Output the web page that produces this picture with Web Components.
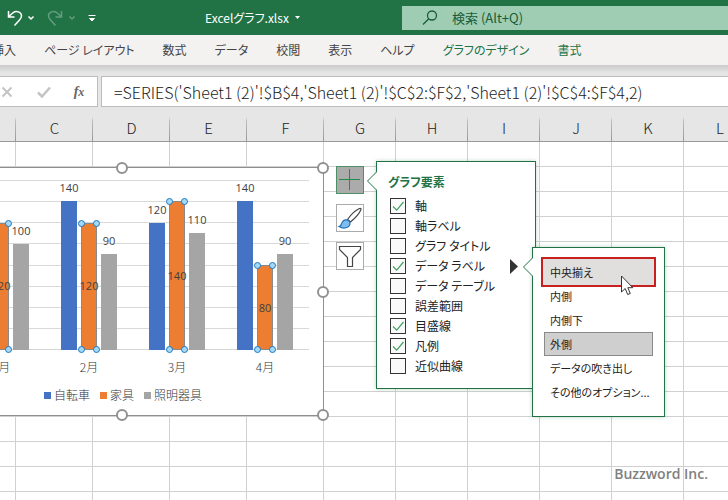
<!DOCTYPE html>
<html lang="ja">
<head>
<meta charset="utf-8">
<title>Excelグラフ.xlsx</title>
<style>
  html, body {
    height: 100%;
    margin: 0;
    overflow: hidden;
  }

  body {
    --green: #217346;
    --line: #d0d0d0;
    display: flex;
    flex-direction: column;
    background: #fff;
    color: #333;
    font-family: "Noto Sans CJK JP", "Noto Sans", sans-serif;
    font-size: 12px;
    font-feature-settings: "palt";
  }

  bar-chart, chart-tools, callout-panel, pointer-arrow, water-mark {
    position: absolute;
  }

  bar-chart { left: -81px; top: 60px; }
  chart-tools { left: 336px; top: 59px; }
  #elements { left: 376px; top: 54px; }
  #labels { left: 532px; top: 140px; }
  pointer-arrow { left: 621px; top: 168px; }
  water-mark { right: 20px; bottom: 16px; }
</style>
</head>
<body>
  <title-bar></title-bar>
  <ribbon-tabs></ribbon-tabs>
  <formula-bar></formula-bar>
  <sheet-grid>
    <bar-chart></bar-chart>
    <chart-tools></chart-tools>
    <callout-panel id="elements" heading="グラフ要素">
      <check-option checked>軸</check-option>
      <check-option>軸ラベル</check-option>
      <check-option>グラフ タイトル</check-option>
      <check-option checked more>データ ラベル</check-option>
      <check-option>データ テーブル</check-option>
      <check-option>誤差範囲</check-option>
      <check-option checked>目盛線</check-option>
      <check-option checked>凡例</check-option>
      <check-option>近似曲線</check-option>
    </callout-panel>
    <callout-panel id="labels">
      <menu-option state="marked">中央揃え</menu-option>
      <menu-option>内側</menu-option>
      <menu-option>内側下</menu-option>
      <menu-option state="selected">外側</menu-option>
      <menu-option>データの吹き出し</menu-option>
      <menu-option>その他のオプション...</menu-option>
    </callout-panel>
    <pointer-arrow></pointer-arrow>
    <water-mark>Buzzword Inc.</water-mark>
  </sheet-grid>

<script>
  class BaseElement extends HTMLElement {
    constructor() {
      super();
      this.shadowDOM = this.attachShadow({ mode: "open" });
    }

    connectedCallback() {
      this.shadowDOM.innerHTML = this.render();
    }
  }

  class TitleBar extends BaseElement {
    render() {
      return `
      <style>
      :host {
        display: grid;
        grid-template-columns: 200px 202px 1fr;
        align-items: center;
        height: 35px;
        background: var(--green);
        color: #fff;
      }
      .quick { display: flex; align-items: center; padding-left: 6px; }
      button {
        display: flex;
        padding: 0;
        border: 0;
        background: none;
        color: inherit;
        font: inherit;
        font-feature-settings: inherit;
      }
      .faded { opacity: .3; }
      .arrow { margin: 0 12px 0 4px; }
      .file { align-items: center; gap: 6px; padding-left: 5px; }
      .search {
        display: flex;
        align-items: center;
        gap: 14px;
        height: 24px;
        padding-left: 20px;
        background: #9fcdb3;
        color: #185c37;
      }
      input {
        flex: 1;
        min-width: 0;
        padding: 0;
        border: 0;
        outline: 0;
        background: none;
        font: inherit;
        font-size: 13px;
      }
      input::placeholder { color: #185c37; opacity: 1; }
      svg { display: block; fill: none; stroke: currentColor; }
      </style>
      <div class="quick">
        <button aria-label="元に戻す"><svg width="17" height="18" stroke-width="1.5"><path d="M2.5 2v6h6M2.8 7.5 7 3.8c3-2.5 8.5-1 8.5 3 0 2-1 3.2-2.2 4.5L8.5 16.5"/></svg></button>
        <button class="arrow" aria-label="元に戻す一覧"><svg width="8" height="6" stroke-width="1.5"><path d="M1.5 1.5 4 4l2.5-2.5"/></svg></button>
        <button class="faded" aria-label="やり直し"><svg width="17" height="18" stroke-width="1.5"><path d="M14.5 2v6h-6M14.2 7.5 10 3.8c-3-2.5-8.5-1-8.5 3 0 2 1 3.2 2.2 4.5l4.8 5.2"/></svg></button>
        <button class="arrow faded" aria-label="やり直し一覧"><svg width="8" height="6" stroke-width="1.5"><path d="M1.5 1.5 4 4l2.5-2.5"/></svg></button>
        <button aria-label="ツール バーのカスタマイズ"><svg width="8" height="8"><path d="M.5 1.5h7M1.5 4.5 4 7l2.5-2.5z" fill="#fff"/></svg></button>
      </div>
      <button class="file">Excelグラフ.xlsx <svg width="5" height="3"><path d="M0 0h5L2.5 3z" fill="#fff" stroke="none"/></svg></button>
      <label class="search">
        <svg width="16" height="16" stroke-width="1.3"><circle cx="10" cy="5.5" r="4.5"/><path d="M6.8 8.7 1 14.5"/></svg>
        <input type="search" aria-label="検索" placeholder="検索 (Alt+Q)">
      </label>`;
    }
  }

  class RibbonTabs extends BaseElement {
    render() {
      const tabs = ["挿入", "ページ レイアウト", "数式", "データ", "校閲", "表示", "ヘルプ"];
      const tools = ["グラフのデザイン", "書式"];
      return `
      <style>
      :host { display: block; background: #f3f2f1; overflow: hidden; }
      nav {
        display: flex;
        gap: 28px;
        margin-left: -8px;
        line-height: 30px;
      }
      a { color: #444; text-decoration: none; white-space: nowrap; }
      .tool { color: var(--green); }
      </style>
      <nav>
        ${tabs.map((t) => `<a href="#">${t}</a>`).join("")}
        ${tools.map((t) => `<a class="tool" href="#">${t}</a>`).join("")}
      </nav>`;
    }
  }

  class FormulaBar extends BaseElement {
    render() {
      return `
      <style>
      :host {
        display: flex;
        gap: 3px;
        padding-top: 11px;
        background: linear-gradient(#cccaca, #e6e6e6 8px);
      }
      .box {
        box-sizing: border-box;
        height: 31px;
        border: 1px solid #bcbcbc;
        border-left-width: 0;
        background: #fff;
      }
      .buttons {
        display: flex;
        align-items: center;
        gap: 24px;
        padding: 0 12px 0 1px;
      }
      button {
        width: 12px;
        padding: 0;
        border: 0;
        background: none;
        color: #666;
        font: italic bold 14px "Liberation Serif", serif;
      }
      svg { display: block; fill: none; stroke: #c4c4c4; stroke-width: 2; }
      small { font-size: 12px; }
      input.box {
        flex: 1;
        min-width: 0;
        padding: 0 12px;
        border-width: 1px 0 1px 1px;
        border-radius: 0;
        outline: 0;
        color: #222;
        font: inherit;
        font-size: 16px;
        font-weight: 300;
      }
      </style>
      <div class="box buttons">
        <button aria-label="キャンセル"><svg width="12" height="12"><path d="m1.5 1.5 9 9M10.5 1.5l-9 9"/></svg></button>
        <button aria-label="入力"><svg width="14" height="12"><path d="m1 6.5 4 4 8-9" stroke-width="2.5"/></svg></button>
        <button aria-label="関数の挿入">f<small>x</small></button>
      </div>
      <input class="box" aria-label="数式バー" value="=SERIES('Sheet1 (2)'!$B$4,'Sheet1 (2)'!$C$2:$F$2,'Sheet1 (2)'!$C$4:$F$4,2)">`;
    }
  }

  class SheetGrid extends BaseElement {
    render() {
      const columns = ["C", "D", "E", "F", "G", "H", "I", "J", "K", "L"];
      const cells = "<td></td>".repeat(columns.length + 1);
      return `
      <style>
      :host {
        display: block;
        position: relative;
        flex: 1;
        min-height: 0;
        overflow: hidden;
      }
      table { border-spacing: 0; }
      th, td {
        box-sizing: border-box;
        padding: 0;
        border-right: 1px solid var(--line);
        border-bottom: 1px solid var(--line);
      }
      th {
        min-width: 72px;
        height: 35px;
        padding-top: 8px;
        border-right: 0;
        border-bottom-color: #999;
        background:
          linear-gradient(transparent 10px, #bbb 14px, #999) right / 1px 100% no-repeat,
          #e6e6e6;
        color: #222;
        font-size: 15px;
        font-weight: 300;
        line-height: 20px;
      }
      th.edge { min-width: 16px; }
      th.wide { min-width: 77px; }
      td { height: 25px; }
      </style>
      <table>
        <tr><th class="edge"></th>${columns.map((c) => `<th class="${c < "G" ? "wide" : ""}">${c}</th>`).join("")}</tr>
        ${`<tr>${cells}</tr>`.repeat(15)}
      </table>
      <slot></slot>`;
    }
  }

  // one column of the chart; value is measured against an axis of 0 to 160
  class DataBar extends BaseElement {
    render() {
      const value = this.getAttribute("value");
      const picked = this.hasAttribute("picked");
      return `
      <style>
      :host {
        display: flex;
        box-sizing: border-box;
        position: relative;
        justify-content: center;
        width: 16px;
        height: ${value / 160 * 100}%;
        background: var(--fill);
        color: #404040;
        font-family: "Open Sans", sans-serif;
        font-size: 11px;
        font-weight: 400;
        line-height: 16px;
      }
      :host([picked]) { align-items: center; border: 1px solid #8a8a8a; }
      :host(:not([picked])) span { margin-top: -21px; }
      i {
        position: absolute;
        box-sizing: border-box;
        width: 7px;
        height: 7px;
        border: 1px solid #1f78bd;
        border-radius: 50%;
        background: #a4daf8;
      }
      .t { top: -4px; }
      .b { bottom: -4px; }
      .l { left: -4px; }
      .r { right: -4px; }
      </style>
      <span>${value}</span>
      ${picked ? '<i class="t l"></i><i class="t r"></i><i class="b l"></i><i class="b r"></i>' : ""}`;
    }
  }

  class BarChart extends BaseElement {
    render() {
      const months = [
        ["1月", 80, 120, 100],
        ["2月", 140, 120, 90],
        ["3月", 120, 140, 110],
        ["4月", 140, 80, 90],
      ];
      const group = ([, a, b, c]) => `
        <div class="group">
          <data-bar class="a" value="${a}"></data-bar>
          <data-bar class="b" value="${b}" picked></data-bar>
          <data-bar class="c" value="${c}"></data-bar>
        </div>`;
      return `
      <style>
      :host {
        display: block;
        box-sizing: border-box;
        width: 405px;
        padding: 12px 14px 11px 37px;
        border: 1px solid #8f8f8f;
        background: #fff;
        color: #333;
        font-weight: 300;
        line-height: 18px;
      }
      .plot { display: grid; height: 170px; }
      .lines, .groups { grid-area: 1 / 1; }
      .lines { display: flex; flex-direction: column; border-bottom: 1px solid #d4d4d4; }
      .lines div { flex: 1; border-top: 1px solid #d9d9d9; }
      .groups, .months { display: grid; grid-template-columns: repeat(4, 1fr); }
      .group { display: flex; align-items: flex-end; justify-content: center; gap: 4px; }
      .months { padding: 8px 0 10px; text-align: center; }
      .a { --fill: #4472c4; }
      .b { --fill: #ed7d31; }
      .c { --fill: #a5a5a5; }
      .legend { display: flex; justify-content: center; gap: 10px; margin: 0 14px 0 -6px; }
      .legend span { display: flex; align-items: center; gap: 3px; }
      .legend span::before { content: ""; width: 7px; height: 7px; background: var(--fill); }
      .handle {
        position: absolute;
        box-sizing: border-box;
        width: 12px;
        height: 12px;
        border: 2px solid #919191;
        border-radius: 50%;
        background: #fff;
        transform: translate(-50%, -50%);
      }
      </style>
      <div class="plot">
        <div class="lines">${"<div></div>".repeat(8)}</div>
        <div class="groups">${months.map(group).join("")}</div>
      </div>
      <div class="months">${months.map((m) => `<span>${m[0]}</span>`).join("")}</div>
      <div class="legend">
        <span class="a">自転車</span><span class="b">家具</span><span class="c">照明器具</span>
      </div>
      <div class="handle" style="left: 50%; top: 0"></div>
      <div class="handle" style="left: 100%; top: 0"></div>
      <div class="handle" style="left: 100%; top: 50%"></div>
      <div class="handle" style="left: 100%; top: 100%"></div>
      <div class="handle" style="left: 50%; top: 100%"></div>`;
    }
  }

  class ChartTools extends BaseElement {
    render() {
      return `
      <style>
      :host { display: flex; flex-direction: column; gap: 10px; }
      button {
        box-sizing: border-box;
        width: 28px;
        height: 28px;
        padding: 0;
        border: 1px solid #ababab;
        background: #fff;
      }
      .active { border-color: #4d9068; background: #ababab; }
      svg { display: block; fill: none; }
      </style>
      <button class="active" aria-label="グラフ要素">
        <svg width="26" height="26" stroke="#1f8f48"><path d="M12.5 2v21M2 12.5h21"/></svg>
      </button>
      <button aria-label="グラフ スタイル">
        <svg width="26" height="26" stroke="#444" stroke-width="1.2">
          <path d="M10.5 14.5C14 9.5 18 5.5 22.5 3.5c1.5-.5 1.8.5 1.3 1.5-2 4.5-6 8.5-10.3 12z" fill="#fff"/>
          <path d="M2 21.5c2.5-.5 2-2.5 3.3-4.5 1.5-2.2 4.5-3 6.5-1.2 2 1.7 1.5 4.7-.8 6.2-2.8 1.5-6.5 1-9-.5z" fill="#7fbdf0" stroke="#2371b5"/>
        </svg>
      </button>
      <button aria-label="グラフ フィルター">
        <svg width="26" height="26" stroke="#444" stroke-width="1.2"><path d="M2.5 3.5h21v3l-8 8v9h-5v-9l-8-8z"/></svg>
      </button>`;
    }
  }

  class CalloutPanel extends BaseElement {
    render() {
      const heading = this.getAttribute("heading");
      return `
      <style>
      :host {
        display: block;
        box-sizing: border-box;
        width: 160px;
        padding: 10px 11px 12px;
        border: 1px solid var(--green);
        background: #fff;
        box-shadow: 0 0 4px rgba(33, 115, 70, .3);
      }
      :host(:not([heading])) { width: 133px; padding-top: 12px; }
      h2 {
        margin: 0 0 4px;
        color: var(--green);
        font-size: 12px;
        line-height: 20px;
      }
      svg { position: absolute; left: -10px; top: 9px; }
      </style>
      <svg width="10" height="20"><path d="M10 .5.5 10 10 19.5" fill="#fff" stroke="#217346"/></svg>
      ${heading ? `<h2>${heading}</h2>` : ""}
      <slot></slot>`;
    }
  }

  class CheckOption extends BaseElement {
    render() {
      return `
      <style>
      :host { display: flex; align-items: center; padding-left: 2px; line-height: 20px; }
      label {
        display: grid;
        flex: 1;
        grid-template-columns: 16px 1fr;
        column-gap: 9px;
        align-items: center;
        color: #222;
      }
      input {
        grid-area: 1 / 1;
        appearance: none;
        box-sizing: border-box;
        width: 16px;
        height: 16px;
        margin: 0;
        border: 1px solid #333;
        background: #fafafa;
      }
      svg { fill: none; stroke: none; pointer-events: none; }
      .tick { grid-area: 1 / 1; }
      input:checked + .tick { stroke: #43a065; stroke-width: 1.2; }
      .more { margin-right: 6px; fill: #333; }
      </style>
      <label>
        <input type="checkbox" ${this.hasAttribute("checked") ? "checked" : ""}>
        <svg class="tick" width="16" height="16"><path d="m3 8.5 3.7 3.7L13.5 4"/></svg>
        <span><slot></slot></span>
      </label>
      ${this.hasAttribute("more") ? '<svg class="more" width="8" height="15"><path d="M0 0v15l8-7.5z"/></svg>' : ""}`;
    }
  }

  class MenuOption extends BaseElement {
    render() {
      return `
      <style>
      :host { display: block; position: relative; }
      button {
        box-sizing: border-box;
        display: block;
        width: 100%;
        height: 24px;
        padding: 0 5px;
        border: 1px solid transparent;
        background: none;
        color: #222;
        font: inherit;
        font-size: 11px;
        font-feature-settings: inherit;
        text-align: left;
        white-space: nowrap;
      }
      :host([state="selected"]) button { border-color: #8a8a8a; background: #cfcfcf; }
      :host([state="marked"]) { z-index: 0; }
      :host([state="marked"])::after {
        content: "";
        position: absolute;
        z-index: -1;
        inset: -3px;
        border: 2px solid #c8201f;
        background: #e1dfdd;
      }
      </style>
      <button><slot></slot></button>`;
    }
  }

  class PointerArrow extends BaseElement {
    render() {
      return `
      <style>
      :host { display: block; }
      svg { display: block; }
      </style>
      <svg width="13" height="21"><path d="M.5 1v16l3.7-3.5 2.5 6 2.6-1-2.5-5.8h5z" fill="#fff" stroke="#333"/></svg>`;
    }
  }

  class WaterMark extends BaseElement {
    render() {
      return `
      <style>
      :host {
        display: block;
        color: #808080;
        font: 600 14px/20px "Open Sans", sans-serif;
      }
      </style>
      <slot></slot>`;
    }
  }

  customElements.define("title-bar", TitleBar);
  customElements.define("ribbon-tabs", RibbonTabs);
  customElements.define("formula-bar", FormulaBar);
  customElements.define("sheet-grid", SheetGrid);
  customElements.define("data-bar", DataBar);
  customElements.define("bar-chart", BarChart);
  customElements.define("chart-tools", ChartTools);
  customElements.define("callout-panel", CalloutPanel);
  customElements.define("check-option", CheckOption);
  customElements.define("menu-option", MenuOption);
  customElements.define("pointer-arrow", PointerArrow);
  customElements.define("water-mark", WaterMark);
</script>
</body>
</html>
